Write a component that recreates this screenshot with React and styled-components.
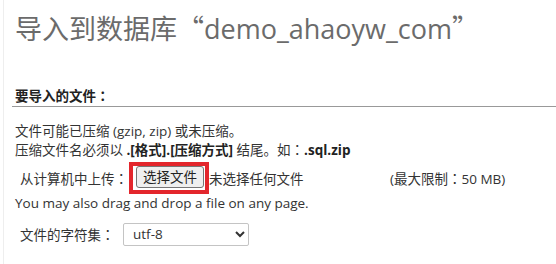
import React from 'react'
import styled, { createGlobalStyle } from 'styled-components'

const GlobalStyle = createGlobalStyle`
    html, body {
        margin: 0;
        padding: 0;
        background: #fff;
    }
    body {
        font-family: "Open Sans", "Noto Sans CJK SC", sans-serif;
        font-size: 13.5px;
        color: #333;
        text-spacing-trim: space-all;
    }
`

const Page = styled.div`
    width: 556px;
    height: 264px;
    box-sizing: border-box;
    margin-left: 3px;
    border-left: 1px solid #eee;
    padding: 10px 0 0 11px;
    overflow: hidden;
`

const Title = styled.h2`
    margin: 0;
    font-weight: normal;
    font-size: 27px;
    line-height: 36px;
    color: #6b6b6b;
    white-space: nowrap;
`

// the quotes have to come from the CJK font to get their full width
const Cjk = styled.span`
    font-family: "Noto Sans CJK SC", sans-serif;
`

// SC puts the full-width colon at the left, the screenshot has it centred
const Colon = styled.span`
    font-family: "Noto Sans CJK JP", sans-serif;
`

const Section = styled.div`
    margin-top: 38px;
`

const Legend = styled.div`
    font-weight: bold;
    color: #222;
    line-height: 20px;
    margin-left: -3px;
    padding-left: 3px;
    border-bottom: 1px solid #999;
`

const Note = styled.p`
    margin: 15px 0 0;
    line-height: 18px;
    color: #333;
    b {
        color: #222;
    }
`

const Row = styled.div`
    display: flex;
    align-items: center;
    margin-top: ${(p) => p.$top || 0}px;
    padding-left: ${(p) => p.$indent || 0}px;
    height: ${(p) => p.$height || 20}px;
    white-space: nowrap;
`

const Label = styled.span`
    width: ${(p) => p.$width}px;
    flex-shrink: 0;
`

const Highlight = styled.span`
    display: inline-flex;
    border: 4px solid #e3262c;
    padding: 0 1px 2px 3px;
`

const FileButton = styled.button`
    font-family: inherit;
    font-size: 13.5px;
    color: #222;
    background: #efefef;
    border: 1px solid #767676;
    border-radius: 3px;
    width: 68px;
    height: 22px;
    padding: 0;
    line-height: 20px;
`

const NoFile = styled.span`
    width: 181px;
    flex-shrink: 0;
`

const Plain = styled.div`
    line-height: 18px;
`

const Select = styled.select`
    font-family: inherit;
    font-size: 13.5px;
    color: #333;
    width: 126px;
    height: 23px;
    border: 1px solid #c4c4c4;
    border-radius: 2px;
    background: #fff;
    padding: 0 5px;
`

export default function App() {
    return (
        <>
            <GlobalStyle />
            <Page>
                <Title>导入到数据库<Cjk>“</Cjk>demo_ahaoyw_com<Cjk>”</Cjk></Title>
                <Section>
                    <Legend>要导入的文件<Colon>：</Colon></Legend>
                    <Note>
                        文件可能已压缩 (gzip, zip) 或未压缩。<br />
                        压缩文件名必须以 <b>.[格式].[压缩方式]</b> 结尾。如<Colon>：</Colon><b>.sql.zip</b>
                    </Note>
                    <Row $top={3} $indent={5} $height={32}>
                        <Label $width={109}>从计算机中上传<Colon>：</Colon></Label>
                        <Highlight>
                            <FileButton>选择文件</FileButton>
                        </Highlight>
                        <NoFile>未选择任何文件</NoFile>
                        <span>(最大限制<Colon>：</Colon>50 MB)</span>
                    </Row>
                    <Plain>You may also drag and drop a file on any page.</Plain>
                    <Row $top={10} $indent={5} $height={24}>
                        <Label $width={103}>文件的字符集<Colon>：</Colon></Label>
                        <Select defaultValue="utf-8">
                            <option value="utf-8">utf-8</option>
                        </Select>
                    </Row>
                </Section>
            </Page>
        </>
    )
}
